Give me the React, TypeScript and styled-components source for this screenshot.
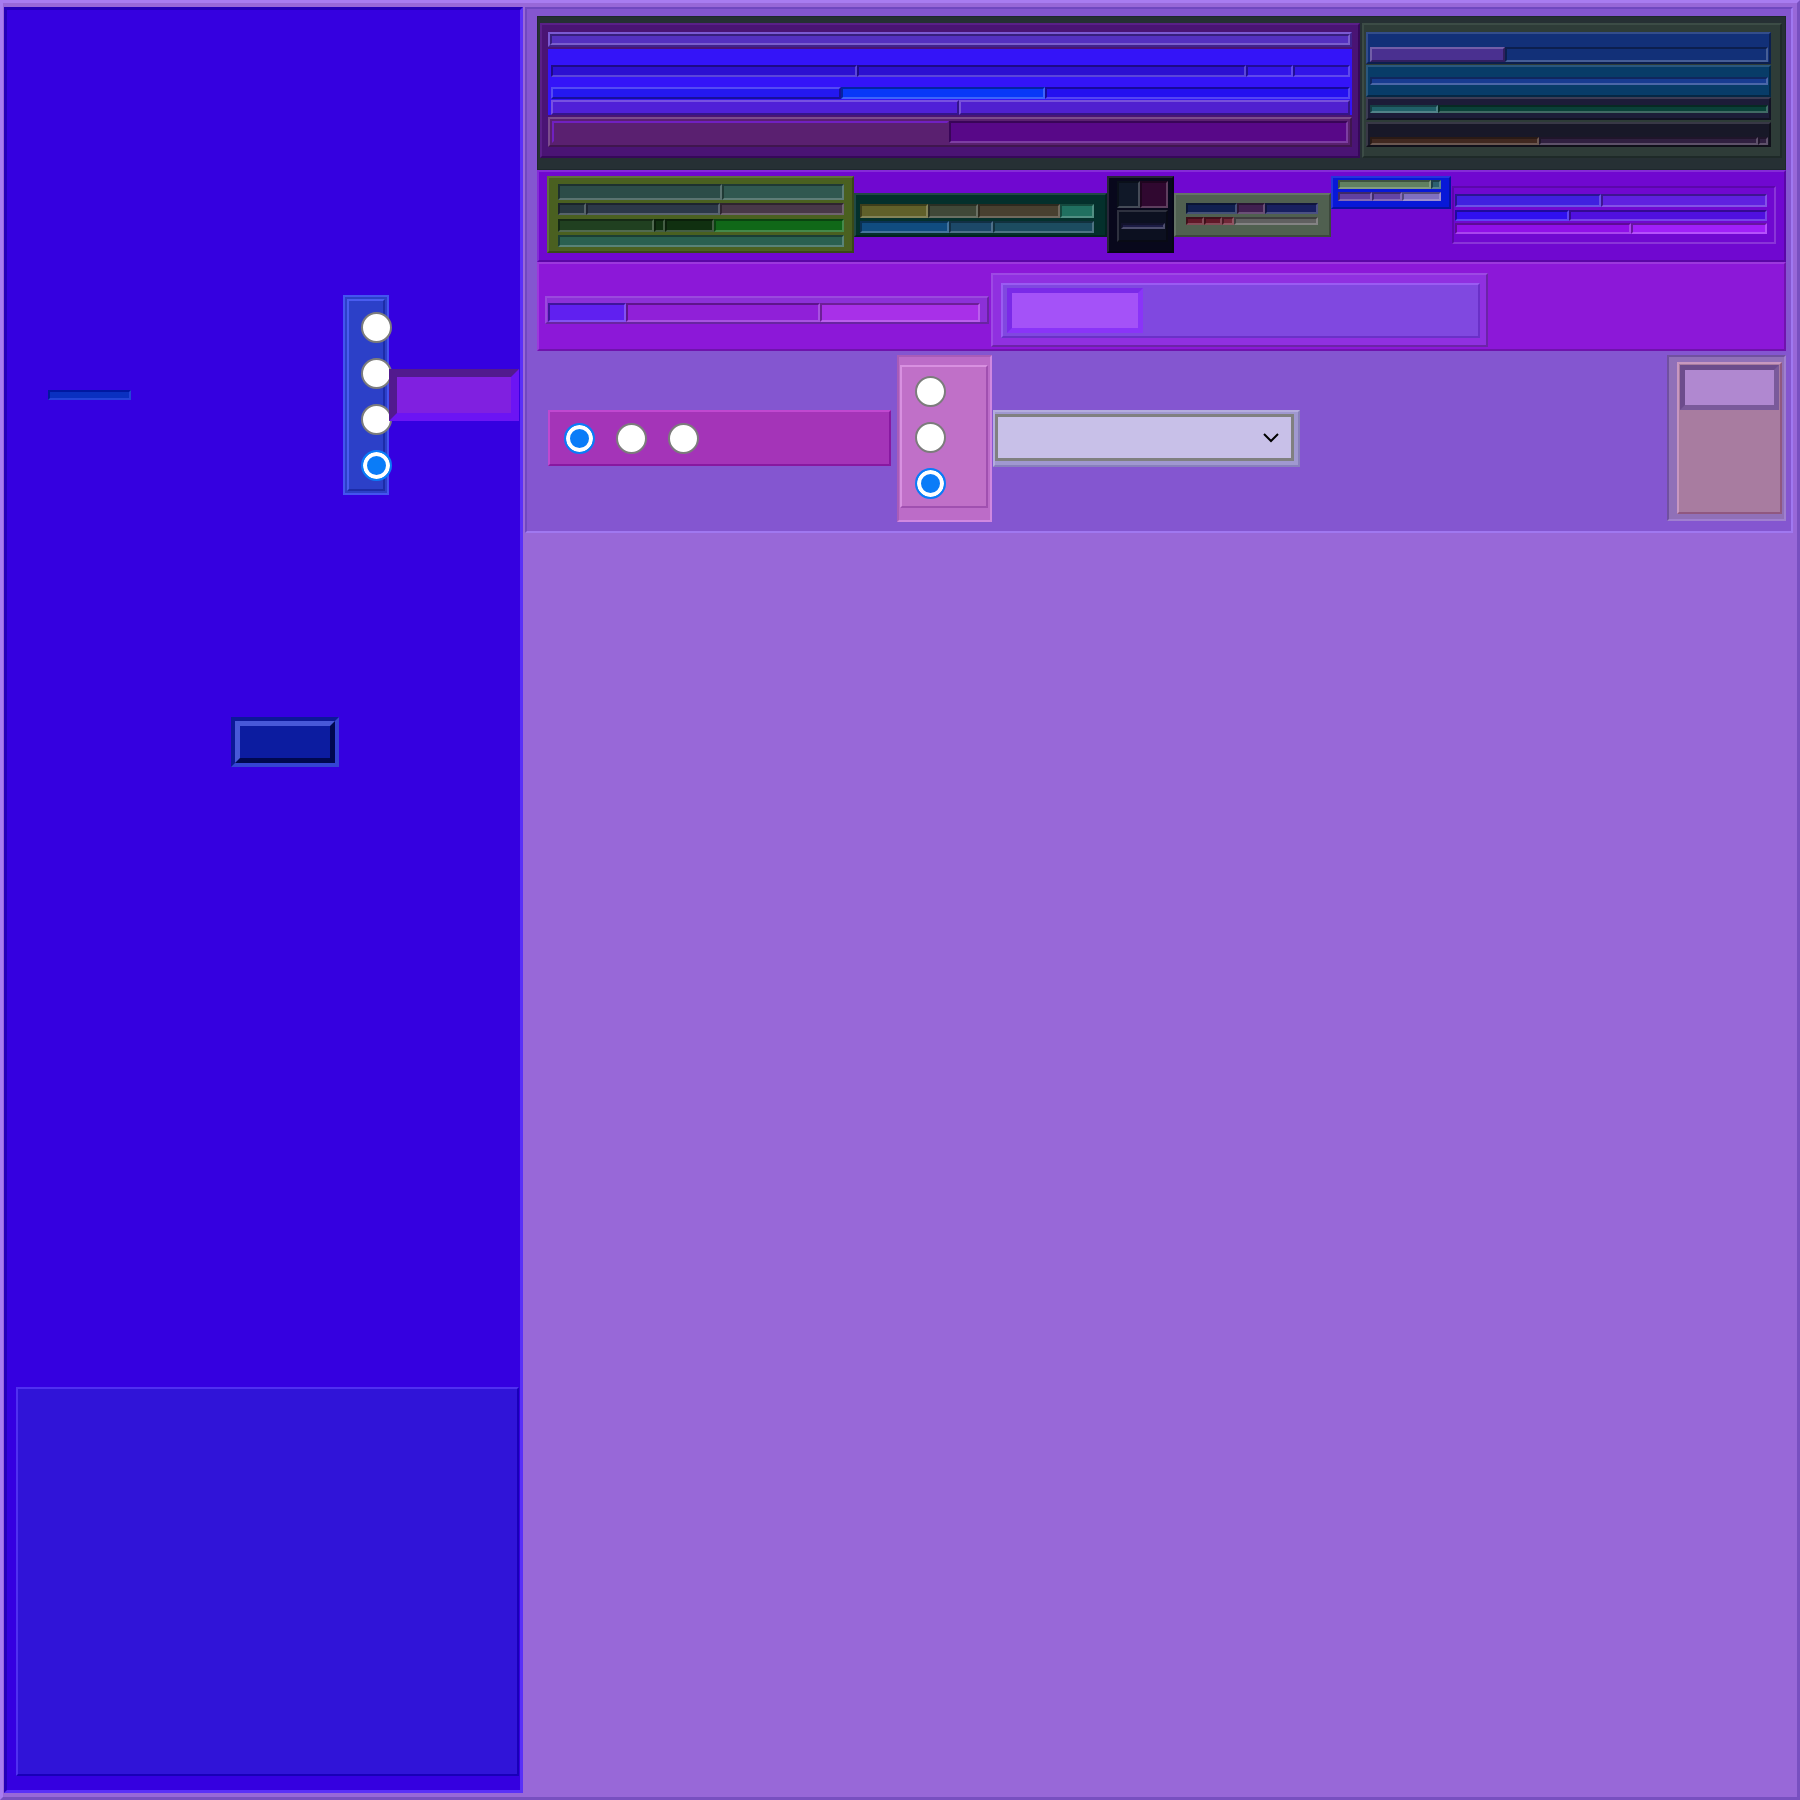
import React from 'react';
import styled, { createGlobalStyle, css } from 'styled-components';

type SegSpec = { w?: number; bg: string; lt?: string; dk?: string; out?: boolean };

const GlobalStyle = createGlobalStyle`
  html, body {
    margin: 0;
    padding: 0;
    background: #9868d8;
  }
  body {
    font-family: "Liberation Sans", Arial, sans-serif;
  }
  * {
    box-sizing: border-box;
  }
`;

// mix a hex colour toward white (t > 0) or black (t < 0)
const mix = (hex: string, t: number) => {
  const n = parseInt(hex.slice(1), 16);
  const to = t > 0 ? 255 : 0;
  const a = Math.abs(t);
  const ch = (v: number) => Math.round(v + (to - v) * a);
  return `rgb(${ch((n >> 16) & 255)}, ${ch((n >> 8) & 255)}, ${ch(n & 255)})`;
};

const bevel = (w: number, lt: string, dk: string) => css`
  border: ${w}px solid;
  border-color: ${lt} ${dk} ${dk} ${lt};
`;

const Page = styled.div`
  width: 1800px;
  height: 1800px;
  display: flex;
  gap: 2px;
  background: #9868d8;
  ${bevel(3, '#a87cf0', '#7850c0')}
  padding: 4px 4px 4px 1px;
`;

/* ---------- left panel ---------- */

const LeftPanel = styled.div`
  flex: 0 0 519px;
  display: flex;
  flex-direction: column;
  align-items: flex-start;
  background: #3500e0;
  ${bevel(3, '#2400b8', '#5a30f8')}
  padding: 0 1px 0 9px;
`;

const ProbeRow = styled.div`
  align-self: stretch;
  display: flex;
  align-items: center;
  height: 200px;
  margin-top: 285px;
`;

const Slot = styled.div`
  width: 83px;
  height: 10px;
  margin-left: 32px;
  margin-right: auto;
  background: #0a30c0;
  ${bevel(2, '#0018a0', '#2444d8')}
`;

const RadioColumn = styled.div`
  width: 46px;
  height: 200px;
  background: #2c40c8;
  border: 2px solid #4454f0;
  padding: 2px;
`;

const RadioRail = styled.div`
  height: 100%;
  display: flex;
  flex-direction: column;
  align-items: flex-start;
  gap: 15px;
  padding: 11px 0 0 12px;
  ${bevel(2, '#4a5cf0', '#1c2ca8')}
`;

const Radio = styled.span<{ $on?: boolean }>`
  flex: 0 0 auto;
  display: block;
  width: 31px;
  height: 31px;
  border-radius: 50%;
  border: 2px solid ${({ $on }) => ($on ? '#0a7cf8' : '#7c7c7c')};
  background: ${({ $on }) => ($on ? '#0a7cf8' : '#ffffff')};
  box-shadow: ${({ $on }) => ($on ? 'inset 0 0 0 4px #ffffff' : 'none')};
`;

const Tray = styled.div`
  width: 130px;
  height: 52px;
  background: #8020e0;
  ${bevel(8, '#521a8e', '#6c14f4')}
`;

const Tile = styled.div`
  width: 108px;
  height: 50px;
  margin: 222px 0 0 215px;
  ${bevel(4, '#0c1898', '#3444d4')}
`;

const TileFace = styled.div`
  height: 100%;
  background: #0c1ca0;
  ${bevel(5, '#4858d8', '#000850')}
`;

const Well = styled.div`
  width: 503px;
  height: 389px;
  margin-top: 620px;
  background: #3014d8;
  ${bevel(2, '#5030f0', '#1800b8')}
`;

/* ---------- right side ---------- */

const RightCol = styled.div`
  flex: 1;
  min-width: 0;
  display: flex;
  flex-direction: column;
`;

const Section = styled.div`
  height: 526px;
  display: flex;
  flex-direction: column;
  background: #8456d0;
  ${bevel(2, '#7048c0', '#a078f0')}
  padding: 7px 5px 0 10px;
`;

const Header = styled.div`
  height: 154px;
  display: flex;
  background: #263034;
  border: 1px solid #1e282c;
  padding: 6px 3px 11px 2px;
`;

const HeaderMain = styled.div`
  flex: 0 0 820px;
  display: flex;
  flex-direction: column;
  background: #4a1474;
  ${bevel(2, '#5a2088', '#36085a')}
  padding: 7px 6px;
`;

const HeaderSide = styled.div`
  flex: 1;
  margin-left: 2px;
  display: flex;
  flex-direction: column;
  background: #2e3c38;
  ${bevel(2, '#3c4c46', '#1e2a28')}
  padding: 7px 9px 9px 2px;
`;

const BlueBlock = styled.div`
  height: 66px;
  margin-top: 2px;
  display: flex;
  flex-direction: column;
  background: #3414f8;
  padding: 16px 2px 0 3px;
`;

const Strip = styled.div<{ $h: number; $bg?: string; $mt?: number; $frame?: boolean; $pad?: number }>`
  flex: 0 0 auto;
  width: 100%;
  display: flex;
  height: ${({ $h }) => $h}px;
  margin-top: ${({ $mt }) => $mt ?? 0}px;
  background: ${({ $bg }) => $bg ?? 'transparent'};
  padding: ${({ $pad }) => $pad ?? 0}px;
  ${({ $frame, $bg }) => $frame && $bg && bevel(2, mix($bg, 0.2), mix($bg, -0.3))}
`;

const Seg = styled.div<{ $w?: number; $bg: string; $lt: string; $dk: string }>`
  flex: ${({ $w }) => ($w ? `0 0 ${$w}px` : '1 1 0')};
  min-width: 0;
  background: ${({ $bg }) => $bg};
  ${({ $lt, $dk }) => bevel(2, $lt, $dk)}
`;

const Slab = styled.div<{ $h: number; $bg: string; $mt?: number; $align?: string }>`
  flex: 0 0 auto;
  display: flex;
  align-items: ${({ $align }) => $align ?? 'center'};
  height: ${({ $h }) => $h}px;
  margin-top: ${({ $mt }) => $mt ?? 0}px;
  background: ${({ $bg }) => $bg};
  ${({ $bg }) => bevel(2, mix($bg, 0.14), mix($bg, -0.35))}
  padding: 0 1px 0 2px;
`;

const Band = styled.div<{ $h: number; $bg: string; $pad: string }>`
  flex: 0 0 auto;
  display: flex;
  align-items: center;
  height: ${({ $h }) => $h}px;
  background: ${({ $bg }) => $bg};
  ${({ $bg }) => bevel(2, mix($bg, 0.14), mix($bg, -0.2))}
  padding: ${({ $pad }) => $pad};
`;

const Card = styled.div<{
  $w: number;
  $h: number;
  $bg: string;
  $pad: string;
  $sunk?: boolean;
  $top?: number;
  $ml?: number;
}>`
  flex: 0 0 ${({ $w }) => $w}px;
  height: ${({ $h }) => $h}px;
  display: flex;
  flex-direction: column;
  background: ${({ $bg }) => $bg};
  ${({ $bg, $sunk }) =>
    $sunk ? bevel(2, mix($bg, -0.18), mix($bg, 0.18)) : bevel(2, mix($bg, 0.12), mix($bg, -0.25))}
  padding: ${({ $pad }) => $pad};
  margin-left: ${({ $ml }) => $ml ?? 0}px;
  ${({ $top }) =>
    $top !== undefined &&
    css`
      align-self: flex-start;
      margin-top: ${$top}px;
    `}
`;

const Frame = styled.div`
  flex: 1;
  display: flex;
  align-items: flex-start;
  background: #8048e0;
  ${bevel(2, '#9a5cf2', '#6a30c8')}
  padding: 3px 4px;
`;

const Swatch = styled.div`
  width: 136px;
  height: 45px;
  background: #a452f8;
  ${bevel(5, '#7a2ae8', '#8a34f8')}
`;

const Deck = styled.div`
  flex: 0 0 180px;
  display: flex;
  align-items: center;
  padding: 0 0 6px 11px;
`;

const RadioGroup = styled.div`
  width: 343px;
  height: 56px;
  display: flex;
  align-items: center;
  gap: 21px;
  background: #a434b8;
  ${bevel(2, '#c048d0', '#8818a0')}
  padding-left: 14px;
`;

const RadioStack = styled.div`
  width: 95px;
  height: 167px;
  margin-left: 6px;
  background: #bc6cc8;
  ${bevel(2, '#a85cb8', '#d088e0')}
  padding: 8px 2px 12px 1px;
`;

const StackInner = styled.div`
  height: 100%;
  display: flex;
  flex-direction: column;
  gap: 15px;
  background: #c070c8;
  ${bevel(2, '#d890e0', '#a050b0')}
  padding: 9px 0 0 13px;
`;

const SelectWrap = styled.div`
  width: 307px;
  height: 57px;
  margin-left: 1px;
  background: #a098d0;
  ${bevel(2, '#b4acde', '#8880bc')}
  padding: 2px 3px 3px 0;
`;

const SelectBox = styled.div`
  width: 299px;
  height: 47px;
  display: flex;
  align-items: center;
  justify-content: flex-end;
  background: #c8c0e8;
  border: 3px solid #808080;
  padding-right: 11px;
`;

const SideCard = styled.div`
  width: 119px;
  height: 166px;
  margin-left: auto;
  background: #9070b8;
  ${bevel(2, '#7050a0', '#a080d0')}
  padding: 5px 2px 5px 8px;
`;

const SideInner = styled.div`
  height: 100%;
  background: #a87ca0;
  ${bevel(2, '#c898c0', '#905880')}
  padding: 1px;
`;

const SideSwatch = styled.div`
  height: 45px;
  background: #b088d0;
  ${bevel(5, '#6c4c8c', '#7a5a9a')}
`;

const Segs = ({ list }: { list: SegSpec[] }) => (
  <>
    {list.map((s, i) => (
      <Seg
        key={i}
        $w={s.w}
        $bg={s.bg}
        $lt={s.lt ?? (s.out ? mix(s.bg, 0.22) : mix(s.bg, -0.35))}
        $dk={s.dk ?? (s.out ? mix(s.bg, -0.35) : mix(s.bg, 0.22))}
      />
    ))}
  </>
);

const App = () => {
  return (
    <>
      <GlobalStyle />
      <Page>
        <LeftPanel>
          <ProbeRow>
            <Slot />
            <RadioColumn>
              <RadioRail>
                <Radio />
                <Radio />
                <Radio />
                <Radio $on />
              </RadioRail>
            </RadioColumn>
            <Tray />
          </ProbeRow>
          <Tile>
            <TileFace />
          </Tile>
          <Well />
        </LeftPanel>

        <RightCol>
          <Section>
            <Header>
              <HeaderMain>
                <Strip $h={15} $bg="#5a30c8" $frame $pad={0}>
                  <Segs list={[{ bg: '#5430c0' }]} />
                </Strip>
                <BlueBlock>
                  <Strip $h={12}>
                    <Segs
                      list={[
                        { w: 306, bg: '#2c10d0' },
                        { w: 389, bg: '#2c10d0' },
                        { w: 47, bg: '#3214e8' },
                        { bg: '#3214e8' },
                      ]}
                    />
                  </Strip>
                  <Strip $h={12} $mt={10}>
                    <Segs
                      list={[
                        { w: 290, bg: '#2418f0', out: true },
                        { w: 204, bg: '#0838f8' },
                        { bg: '#2410f0' },
                      ]}
                    />
                  </Strip>
                  <Strip $h={15} $mt={1} $bg="#6a10c0">
                    <Segs list={[{ w: 408, bg: '#5020d8', out: true }, { bg: '#5020d0', out: true }]} />
                  </Strip>
                </BlueBlock>
                <Strip $h={30} $mt={2} $bg="#5a2070" $frame $pad={2}>
                  <Segs
                    list={[
                      { w: 397, bg: '#5a2070', lt: '#7020c0', dk: '#5a2070' },
                      { bg: '#580888' },
                    ]}
                  />
                </Strip>
              </HeaderMain>

              <HeaderSide>
                <Slab $h={32} $bg="#123078" $align="flex-end">
                  <Strip $h={15}>
                    <Segs list={[{ w: 135, bg: '#4a3090', out: true }, { bg: '#123078' }]} />
                  </Strip>
                </Slab>
                <Slab $h={32} $mt={1} $bg="#083c68">
                  <Strip $h={8}>
                    <Segs list={[{ bg: '#183c90' }]} />
                  </Strip>
                </Slab>
                <Slab $h={23} $bg="#1c1c38">
                  <Strip $h={8}>
                    <Segs list={[{ w: 68, bg: '#206068' }, { bg: '#0a4038' }]} />
                  </Strip>
                </Slab>
                <Slab $h={25} $mt={2} $bg="#181828" $align="flex-end">
                  <Strip $h={8}>
                    <Segs list={[{ w: 169, bg: '#402820' }, { bg: '#302040' }, { w: 10, bg: '#302040' }]} />
                  </Strip>
                </Slab>
              </HeaderSide>
            </Header>

            <Band $h={92} $bg="#7008d0" $pad="0 0 3px 8px">
              <Card $w={307} $h={77} $bg="#4a6020" $pad="6px 8px 4px 9px">
                <Strip $h={16}>
                  <Segs list={[{ w: 164, bg: '#2c4c48' }, { bg: '#305850' }]} />
                </Strip>
                <Strip $h={12} $mt={3}>
                  <Segs list={[{ w: 28, bg: '#283840' }, { w: 134, bg: '#2c3848' }, { bg: '#483848' }]} />
                </Strip>
                <Strip $h={13} $mt={4} $bg="#106010">
                  <Segs
                    list={[
                      { w: 96, bg: '#204020' },
                      { w: 11, bg: '#103010' },
                      { w: 49, bg: '#103010' },
                      { bg: '#106818' },
                    ]}
                  />
                </Strip>
                <Strip $h={12} $mt={3}>
                  <Segs list={[{ bg: '#2a6050' }]} />
                </Strip>
              </Card>

              <Card $w={253} $h={44} $bg="#04302c" $pad="9px 11px 2px 4px">
                <Strip $h={14}>
                  <Segs
                    list={[
                      { w: 68, bg: '#60602a' },
                      { w: 50, bg: '#404838' },
                      { w: 82, bg: '#484030' },
                      { bg: '#207060' },
                    ]}
                  />
                </Strip>
                <Strip $h={12} $mt={3}>
                  <Segs list={[{ w: 89, bg: '#104c80' }, { w: 44, bg: '#1c4868' }, { bg: '#1c4c60' }]} />
                </Strip>
              </Card>

              <Card $w={67} $h={77} $bg="#08081c" $pad="3px 4px 9px 8px">
                <Strip $h={27}>
                  <Segs list={[{ w: 23, bg: '#101828' }, { bg: '#300830' }]} />
                </Strip>
                <Slab $h={32} $mt={2} $bg="#0c1020">
                  <Strip $h={6}>
                    <Segs list={[{ bg: '#1c1c44' }]} />
                  </Strip>
                </Slab>
              </Card>

              <Card $w={157} $h={44} $bg="#506050" $pad="8px 11px 2px 10px">
                <Strip $h={11} $bg="#2c2838">
                  <Segs list={[{ w: 51, bg: '#102050' }, { w: 28, bg: '#402050' }, { bg: '#182060' }]} />
                </Strip>
                <Strip $h={8} $mt={3}>
                  <Segs
                    list={[
                      { w: 18, bg: '#601828' },
                      { w: 18, bg: '#601828' },
                      { w: 12, bg: '#702838' },
                      { bg: '#606060' },
                    ]}
                  />
                </Strip>
              </Card>

              <Card $w={120} $h={33} $bg="#0818d8" $pad="2px 8px 0 5px" $top={4}>
                <Strip $h={9}>
                  <Segs list={[{ bg: '#608060' }, { w: 10, bg: '#2c6070' }]} />
                </Strip>
                <Strip $h={9} $mt={3}>
                  <Segs list={[{ w: 34, bg: '#6040a0' }, { w: 30, bg: '#6444a4' }, { bg: '#8070c0' }]} />
                </Strip>
              </Card>

              <Card $w={324} $h={58} $bg="#7008d0" $pad="6px 7px 0 1px" $sunk $ml={1}>
                <Strip $h={13} $bg="#3010e8">
                  <Segs list={[{ w: 146, bg: '#4020e0' }, { bg: '#6020e0' }]} />
                </Strip>
                <Strip $h={11} $mt={3}>
                  <Segs list={[{ w: 114, bg: '#3010f0' }, { bg: '#5010e0' }]} />
                </Strip>
                <Strip $h={11} $mt={2}>
                  <Segs list={[{ w: 176, bg: '#9010e8' }, { bg: '#a020f8' }]} />
                </Strip>
              </Card>
            </Band>

            <Band $h={89} $bg="#8c18d8" $pad="7px 0 0 6px">
              <Card $w={444} $h={28} $bg="#8c30d8" $pad="5px 7px 0 1px">
                <Strip $h={19}>
                  <Segs list={[{ w: 78, bg: '#6020f0' }, { w: 194, bg: '#9020d8' }, { bg: '#a830e8' }]} />
                </Strip>
              </Card>
              <Card $w={497} $h={74} $bg="#9030e0" $pad="8px 6px 7px 8px" $ml={2}>
                <Frame>
                  <Swatch />
                </Frame>
              </Card>
            </Band>

            <Deck>
              <RadioGroup>
                <Radio $on />
                <Radio />
                <Radio />
              </RadioGroup>
              <RadioStack>
                <StackInner>
                  <Radio />
                  <Radio />
                  <Radio $on />
                </StackInner>
              </RadioStack>
              <SelectWrap>
                <SelectBox>
                  <svg width="18" height="11" viewBox="0 0 18 11" fill="none">
                    <path d="M2 2 L9 9 L16 2" stroke="#000" strokeWidth="2" />
                  </svg>
                </SelectBox>
              </SelectWrap>
              <SideCard>
                <SideInner>
                  <SideSwatch />
                </SideInner>
              </SideCard>
            </Deck>
          </Section>
        </RightCol>
      </Page>
    </>
  );
};

export default App;
